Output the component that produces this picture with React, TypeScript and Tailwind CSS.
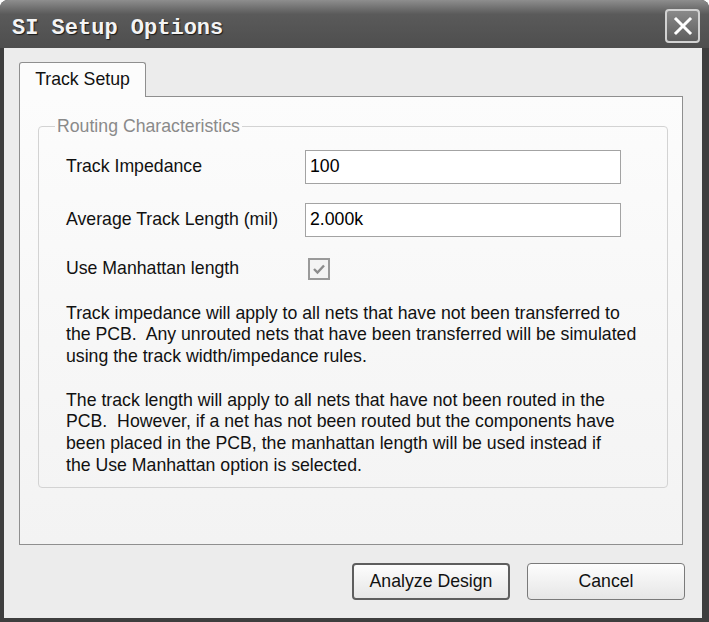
import React from "react";

const ui = { fontFamily: '"Liberation Sans", Arial, sans-serif' };

function CloseButton() {
  return (
    <button
      type="button"
      className="mt-[4px] flex h-[34px] w-[35px] items-center justify-center rounded-[4px] border-2 border-[#d2d2d2] bg-linear-to-b from-[#8a8a8a] to-[#5e5e5e]"
    >
      <svg width="20" height="20" viewBox="0 0 20 20">
        <path d="M3 3 L17 17 M17 3 L3 17" stroke="#ffffff" strokeWidth="3" strokeLinecap="square" />
      </svg>
    </button>
  );
}

function Field({ label, value }: { label: string; value: string }) {
  return (
    <div className="flex h-[34px] items-center">
      <span className="w-[239px] text-[#111]">{label}</span>
      <div className="flex h-[34px] w-[316px] items-center border border-[#a3a3a3] bg-white px-[4px]">
        {value}
      </div>
    </div>
  );
}

export default function App() {
  return (
    <div className="h-[622px] w-[709px] bg-white">
      <div
        className="flex h-[622px] w-[709px] flex-col overflow-hidden rounded-t-[8px] bg-[#3e3e3e] text-[17.7px] leading-[21.7px]"
        style={ui}
      >
        {/* title bar */}
        <div className="flex h-[48px] shrink-0 items-center justify-between bg-linear-to-b from-[#8e8e8e] via-[#5a5a5a] via-30% to-[#4e4e4e] pl-[12px] pr-[9px]">
          <span
            className="pt-[9px] text-[22px] font-bold text-[#f4f4f4] [text-shadow:1px_1px_1px_#1a1a1a]"
            style={{ fontFamily: '"Liberation Mono", "Courier New", monospace' }}
          >
            SI Setup Options
          </span>
          <CloseButton />
        </div>

        {/* body */}
        <div className="mb-[4px] ml-[4px] mr-[7px] flex flex-1 flex-col bg-[#ececec] pb-[18px] pl-[15px] pr-[19px] pt-[14px]">
          <div className="flex">
            <div className="relative z-10 -mb-px flex h-[35px] w-[127px] items-center justify-center rounded-t-[3px] border border-b-0 border-[#8f8f8f] bg-[#fcfcfc] text-[#111]">
              Track Setup
            </div>
          </div>

          <div className="flex-1 border border-[#8f8f8f] bg-linear-to-b from-[#fcfcfc] to-[#f3f3f3] pl-[18px] pr-[14px] pt-[19px]">
            <fieldset className="rounded-[4px] border border-[#d3d3d3] pb-[11px] pl-[27px]">
              <legend className="-ml-[11px] px-[2px] text-[#8a8a8a]">Routing Characteristics</legend>

              <div className="mt-[12px] flex flex-col">
                <Field label="Track Impedance" value="100" />
                <div className="h-[19px]" />
                <Field label="Average Track Length (mil)" value="2.000k" />

                <div className="mt-[21px] flex h-[22px] items-center">
                  <span className="w-[242px] text-[#111]">Use Manhattan length</span>
                  <span className="flex h-[22px] w-[22px] items-center justify-center border-2 border-[#9a9a9a] bg-[#f4f4f4]">
                    <svg width="14" height="14" viewBox="0 0 14 14">
                      <path d="M2 7 L5.5 10.5 L12 3.5" fill="none" stroke="#8c8c8c" strokeWidth="2.4" />
                    </svg>
                  </span>
                </div>

                <p className="mt-[23px] text-[#111]">
                  Track impedance will apply to all nets that have not been transferred to
                  <br />
                  the PCB.&nbsp; Any unrouted nets that have been transferred will be simulated
                  <br />
                  using the track width/impedance rules.
                </p>
                <p className="mt-[21.7px] text-[#111]">
                  The track length will apply to all nets that have not been routed in the
                  <br />
                  PCB.&nbsp; However, if a net has not been routed but the components have
                  <br />
                  been placed in the PCB, the manhattan length will be used instead if
                  <br />
                  the Use Manhattan option is selected.
                </p>
              </div>
            </fieldset>
          </div>

          <div className="mt-[18px] flex justify-end gap-[17px]">
            <button
              type="button"
              className="h-[37px] w-[158px] rounded-[4px] border-2 border-[#5e5e5e] bg-linear-to-b from-[#fdfdfd] to-[#e6e6e6] text-[#111]"
            >
              Analyze Design
            </button>
            <button
              type="button"
              className="-mr-[2px] h-[37px] w-[158px] rounded-[4px] border border-[#7a7a7a] bg-linear-to-b from-[#fdfdfd] to-[#e6e6e6] text-[#111]"
            >
              Cancel
            </button>
          </div>
        </div>
      </div>
    </div>
  );
}
